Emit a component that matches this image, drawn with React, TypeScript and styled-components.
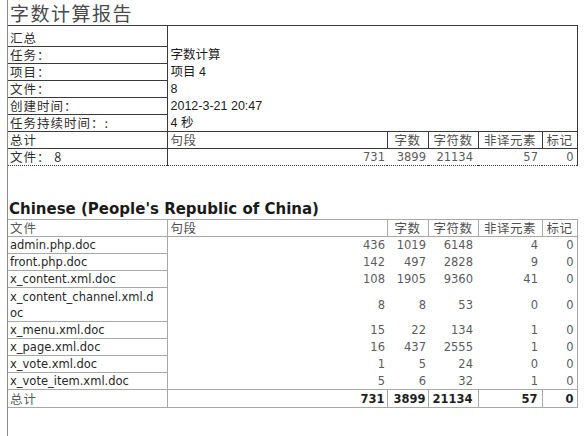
import React from "react";
import styled, { createGlobalStyle } from "styled-components";

const GlobalStyle = createGlobalStyle`
  html, body { margin: 0; padding: 0; background: #ffffff; }
  body { font-family: "Liberation Sans", "Noto Sans CJK SC", sans-serif; }
`;

const CJK = `"Noto Sans CJK SC", sans-serif`;
const LATIN = `"DejaVu Sans", "Noto Sans CJK SC", sans-serif`;
const WIDTHS = [159, 220, 41, 50, 64, 35];

const Page = styled.div`
  width: 586px;
  height: 436px;
  overflow: hidden;
  padding-left: 7px;
  box-sizing: border-box;
`;

const Sheet = styled.div`
  width: 570px;
  height: 100%;
  border-left: 1px solid #8c8c8c;
  display: flex;
  flex-direction: column;
`;

const Title = styled.h1`
  margin: 0;
  height: 25px;
  padding-left: 2px;
  font: 400 19px/25px ${CJK};
  letter-spacing: 1.5px;
  color: #4a4a4a;
`;

const Grid = styled.table<{ $line: string }>`
  width: 569px;
  border-collapse: collapse;
  table-layout: fixed;
  border-top: 1px solid ${(p) => p.$line};
`;

const Row = styled.tr<{ $h?: number }>`
  height: ${(p) => p.$h ?? 17}px;
`;

const Label = styled.td<{ $line: string; $bottom?: string; $tall?: boolean; $grey?: boolean; $top?: boolean }>`
  padding: 0 0 0 2px;
  vertical-align: ${(p) => (p.$tall ? "bottom" : "middle")};
  border-top: ${(p) => (p.$top ? `1px solid ${p.$line}` : "none")};
  border-right: 1px solid ${(p) => p.$line};
  border-bottom: 1px ${(p) => p.$bottom ?? "solid"} ${(p) => p.$line};
  font: 400 12.5px/16px ${CJK};
  letter-spacing: 1px;
  color: ${(p) => (p.$grey ? "#5a5a5a" : "#2e2e2e")};
  white-space: nowrap;
`;

const FileName = styled.td<{ $line: string }>`
  padding: 0 0 0 2px;
  border-right: 1px solid ${(p) => p.$line};
  border-bottom: 1px solid ${(p) => p.$line};
  font: 400 11.5px/16px ${LATIN};
  color: #262626;
  white-space: nowrap;
  overflow: hidden;
`;

const Value = styled.td<{ $line: string }>`
  padding: 0 0 0 3px;
  border-right: 1px solid ${(p) => p.$line};
  font: 400 12.5px/16px "Liberation Sans", ${CJK};
  color: #1c1c1c;
  white-space: nowrap;
`;

const Head = styled.td<{ $line: string; $center?: boolean; $edge?: boolean; $open?: boolean }>`
  padding: 0 0 0 ${(p) => (p.$center ? 0 : 3)}px;
  text-align: ${(p) => (p.$center ? "center" : "left")};
  border-top: 1px solid ${(p) => p.$line};
  border-left: ${(p) => (p.$open ? "none" : `1px solid ${p.$line}`)};
  border-right: ${(p) => (p.$edge ? `1px solid ${p.$line}` : "none")};
  border-bottom: 1px solid ${(p) => p.$line};
  font: 400 12.5px/16px ${CJK};
  letter-spacing: 0.5px;
  color: #505050;
  white-space: nowrap;
`;

const Num = styled.td<{
  $line: string;
  $pad?: number;
  $bold?: boolean;
  $divider?: boolean;
  $edge?: boolean;
  $bottom?: string;
  $top?: boolean;
}>`
  padding: 0 ${(p) => p.$pad ?? 2}px 0 0;
  text-align: right;
  vertical-align: middle;
  border-top: ${(p) => (p.$top ? `1px solid ${p.$line}` : "none")};
  border-right: ${(p) => (p.$divider || p.$edge ? `1px solid ${p.$line}` : "none")};
  border-bottom: ${(p) => (p.$bottom ? `1px ${p.$bottom} ${p.$line}` : "none")};
  font: ${(p) => (p.$bold ? 700 : 400)} 11.5px/16px ${LATIN};
  color: ${(p) => (p.$bold ? "#1e1e1e" : "#5c5c5c")};
  white-space: nowrap;
`;

const Heading = styled.h2`
  margin: 34px 0 0;
  height: 19px;
  padding-left: 1px;
  font: 700 15px/19px "DejaVu Sans", sans-serif;
  color: #1a1a1a;
`;

const Cols = () => (
  <colgroup>
    {WIDTHS.map((w, i) => (
      <col key={i} style={{ width: w }} />
    ))}
  </colgroup>
);

const DARK = "#3a3a3a";
const LIGHT = "#a8a8a8";

const summary: [string, string][] = [
  ["任务：", "字数计算"],
  ["项目：", "项目 4"],
  ["文件：", "8"],
  ["创建时间：", "2012-3-21 20:47"],
  ["任务持续时间：:", "4 秒"],
];

const HEADS = ["字数", "字符数", "非译元素", "标记"];
const PADS = [2, 5, 4, 3];

type FileRow = { name: React.ReactNode; v: number[]; h?: number };

const files: FileRow[] = [
  { name: "admin.php.doc", v: [436, 1019, 6148, 4, 0] },
  { name: "front.php.doc", v: [142, 497, 2828, 9, 0] },
  { name: "x_content.xml.doc", v: [108, 1905, 9360, 41, 0] },
  {
    name: (
      <>
        x_content_channel.xml.d
        <br />
        oc
      </>
    ),
    v: [8, 8, 53, 0, 0],
    h: 34,
  },
  { name: "x_menu.xml.doc", v: [15, 22, 134, 1, 0] },
  { name: "x_page.xml.doc", v: [16, 437, 2555, 1, 0] },
  { name: "x_vote.xml.doc", v: [1, 5, 24, 0, 0] },
  { name: "x_vote_item.xml.doc", v: [5, 6, 32, 1, 0] },
];

const totals = [731, 3899, 21134, 57, 0];

export default function App() {
  return (
    <>
      <GlobalStyle />
      <Page>
        <Sheet>
          <Title>字数计算报告</Title>
          <Grid $line={DARK}>
            <Cols />
            <tbody>
              <Row $h={21}>
                <Label $line={DARK} $tall>
                  汇总
                </Label>
                <Value $line={DARK} colSpan={5} />
              </Row>
              {summary.map(([k, v]) => (
                <Row key={k}>
                  <Label $line={DARK}>{k}</Label>
                  <Value $line={DARK} colSpan={5}>
                    {v}
                  </Value>
                </Row>
              ))}
              <Row>
                <Label $line={DARK} $top>
                  总计
                </Label>
                <Head $line={DARK} $open>
                  句段
                </Head>
                {HEADS.map((h, i) => (
                  <Head key={h} $line={DARK} $center $edge={i === HEADS.length - 1}>
                    {h}
                  </Head>
                ))}
              </Row>
              <Row>
                <Label $line={DARK} $bottom="dotted">
                  文件： 8
                </Label>
                {totals.map((n, i) => (
                  <Num
                    key={i}
                    $line={DARK}
                    $pad={i === 0 ? 2 : PADS[i - 1]}
                    $edge={i === totals.length - 1}
                    $bottom="dotted"
                  >
                    {n}
                  </Num>
                ))}
              </Row>
            </tbody>
          </Grid>

          <Heading>Chinese (People's Republic of China)</Heading>

          <Grid $line={LIGHT}>
            <Cols />
            <tbody>
              <Row>
                <Label $line={LIGHT} $grey $top>
                  文件
                </Label>
                <Head $line={LIGHT} $open>
                  句段
                </Head>
                {HEADS.map((h, i) => (
                  <Head key={h} $line={LIGHT} $center $edge={i === HEADS.length - 1}>
                    {h}
                  </Head>
                ))}
              </Row>
              {files.map((f, r) => (
                <Row key={r} $h={f.h}>
                  <FileName $line={LIGHT}>{f.name}</FileName>
                  {f.v.map((n, i) => (
                    <Num key={i} $line={LIGHT} $pad={i === 0 ? 2 : PADS[i - 1]} $edge={i === 4}>
                      {n}
                    </Num>
                  ))}
                </Row>
              ))}
              <Row $h={18}>
                <Label $line={LIGHT} $grey $top>
                  总计
                </Label>
                {totals.map((n, i) => (
                  <Num
                    key={i}
                    $line={LIGHT}
                    $bold
                    $pad={i === 0 ? 2 : PADS[i - 1]}
                    $divider
                    $top
                    $bottom="solid"
                  >
                    {n}
                  </Num>
                ))}
              </Row>
            </tbody>
          </Grid>
        </Sheet>
      </Page>
    </>
  );
}
